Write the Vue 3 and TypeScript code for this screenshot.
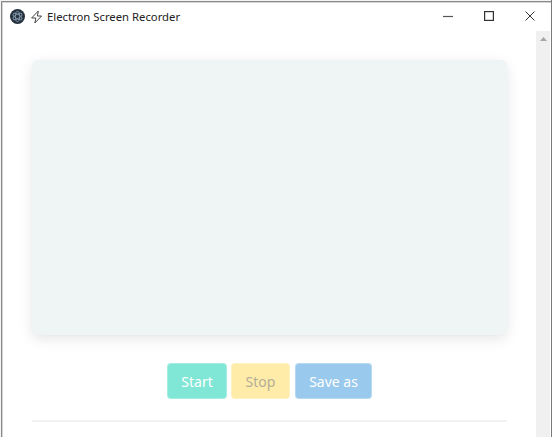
<script setup lang="ts">
const buttons: { label: string; kind: string }[] = [
  { label: 'Start', kind: 'start' },
  { label: 'Stop', kind: 'stop' },
  { label: 'Save as', kind: 'save' },
]
</script>

<template>
  <div class="window">
    <header class="titlebar">
      <svg class="logo" width="15" height="15" viewBox="0 0 15 15">
        <circle cx="7.5" cy="7.5" r="7.5" fill="#25303e" />
        <g fill="none" stroke="#8ba3b5" stroke-width="0.8">
          <ellipse cx="7.5" cy="7.5" rx="5.2" ry="2.1" transform="rotate(30 7.5 7.5)" />
          <ellipse cx="7.5" cy="7.5" rx="5.2" ry="2.1" transform="rotate(90 7.5 7.5)" />
          <ellipse cx="7.5" cy="7.5" rx="5.2" ry="2.1" transform="rotate(150 7.5 7.5)" />
        </g>
      </svg>
      <svg class="bolt" width="14" height="14" viewBox="0 0 14 14">
        <path d="M8.3 1 1.6 8h4.2l-.9 5 6.7-7H7.4z" fill="none" stroke="#444" stroke-width="1" stroke-linejoin="round" />
      </svg>
      <span class="title">Electron Screen Recorder</span>
      <div class="controls">
        <span class="ctl">
          <svg width="10" height="10" viewBox="0 0 10 10"><path d="M0 5.5h10" stroke="#555" stroke-width="1.2" /></svg>
        </span>
        <span class="ctl">
          <svg width="10" height="10" viewBox="0 0 10 10"><rect x=".6" y=".6" width="8.8" height="8.8" fill="none" stroke="#333" stroke-width="1.2" /></svg>
        </span>
        <span class="ctl">
          <svg width="10" height="10" viewBox="0 0 10 10"><path d="M.5.5l9 9M9.5.5l-9 9" stroke="#333" stroke-width="1" /></svg>
        </span>
      </div>
    </header>
    <div class="body">
      <main class="content">
        <div class="video"></div>
        <div class="actions">
          <button v-for="b in buttons" :key="b.label" class="btn" :class="b.kind">{{ b.label }}</button>
        </div>
        <hr class="rule" />
      </main>
      <aside class="scrollbar">
        <svg width="9" height="6" viewBox="0 0 9 6"><path d="M4.5 1 8 5H1z" fill="#a6a6a6" /></svg>
      </aside>
    </div>
  </div>
</template>

<style>
html, body { margin: 0; overflow: hidden; background: #fff; }
</style>

<style scoped>
.window {
  box-sizing: border-box;
  width: 552px;
  height: 437px;
  border-right: 1px solid #7a7a7a;
  box-shadow: inset 1px 1px 0 #f4f4f4, inset 2px 2px 0 #8a8a8a, inset 3px 3px 0 #d4d4d4;
  display: flex;
  flex-direction: column;
  overflow: hidden;
  background: #fff;
  font-family: "Noto Sans", "Open Sans", sans-serif;
}
.titlebar {
  flex: 0 0 31px;
  display: flex;
  align-items: center;
  padding-left: 10px;
  padding-top: 2px;
  box-sizing: border-box;
}
.logo { margin-right: 5px; }
.bolt { margin-right: 3px; }
.title { font-size: 11.3px; color: #222; white-space: nowrap; }
.controls { margin-left: auto; display: flex; padding-right: 1px; }
.ctl {
  width: 41px;
  height: 29px;
  display: flex;
  align-items: center;
  justify-content: center;
  margin-top: -1px;
}
.body { flex: 1; display: flex; min-height: 0; }
.content {
  flex: 1;
  padding: 29px 29px 0 32px;
  min-width: 0;
}
.video {
  height: 275px;
  background: #eff5f5;
  border-radius: 6px;
  box-shadow: 0 4px 14px rgba(10, 10, 10, 0.1), 0 0 1px rgba(10, 10, 10, 0.04);
}
.actions {
  display: flex;
  justify-content: center;
  gap: 4px;
  margin-top: 28px;
  height: 36px;
}
.btn {
  height: 36px;
  padding: 0;
  border: 1px solid rgba(255, 255, 255, 0.3);
  border-radius: 4px;
  font: inherit;
  font-size: 14px;
  box-sizing: border-box;
  color: #fff;
}
.start { background: #80e6d5; width: 60px; }
.stop { background: #ffeca8; color: #b3ae99; width: 59px; margin-right: 1px; }
.save { background: #99c9ec; width: 77px; }
.rule {
  border: 0;
  height: 2px;
  background: #f2f2f2;
  margin: 21px 0 0;
}
.scrollbar {
  flex: 0 0 14px;
  margin-right: 1px;
  background: #f0f0f0;
  display: flex;
  justify-content: center;
  align-items: flex-start;
  padding-top: 5px;
  box-sizing: border-box;
}
</style>
